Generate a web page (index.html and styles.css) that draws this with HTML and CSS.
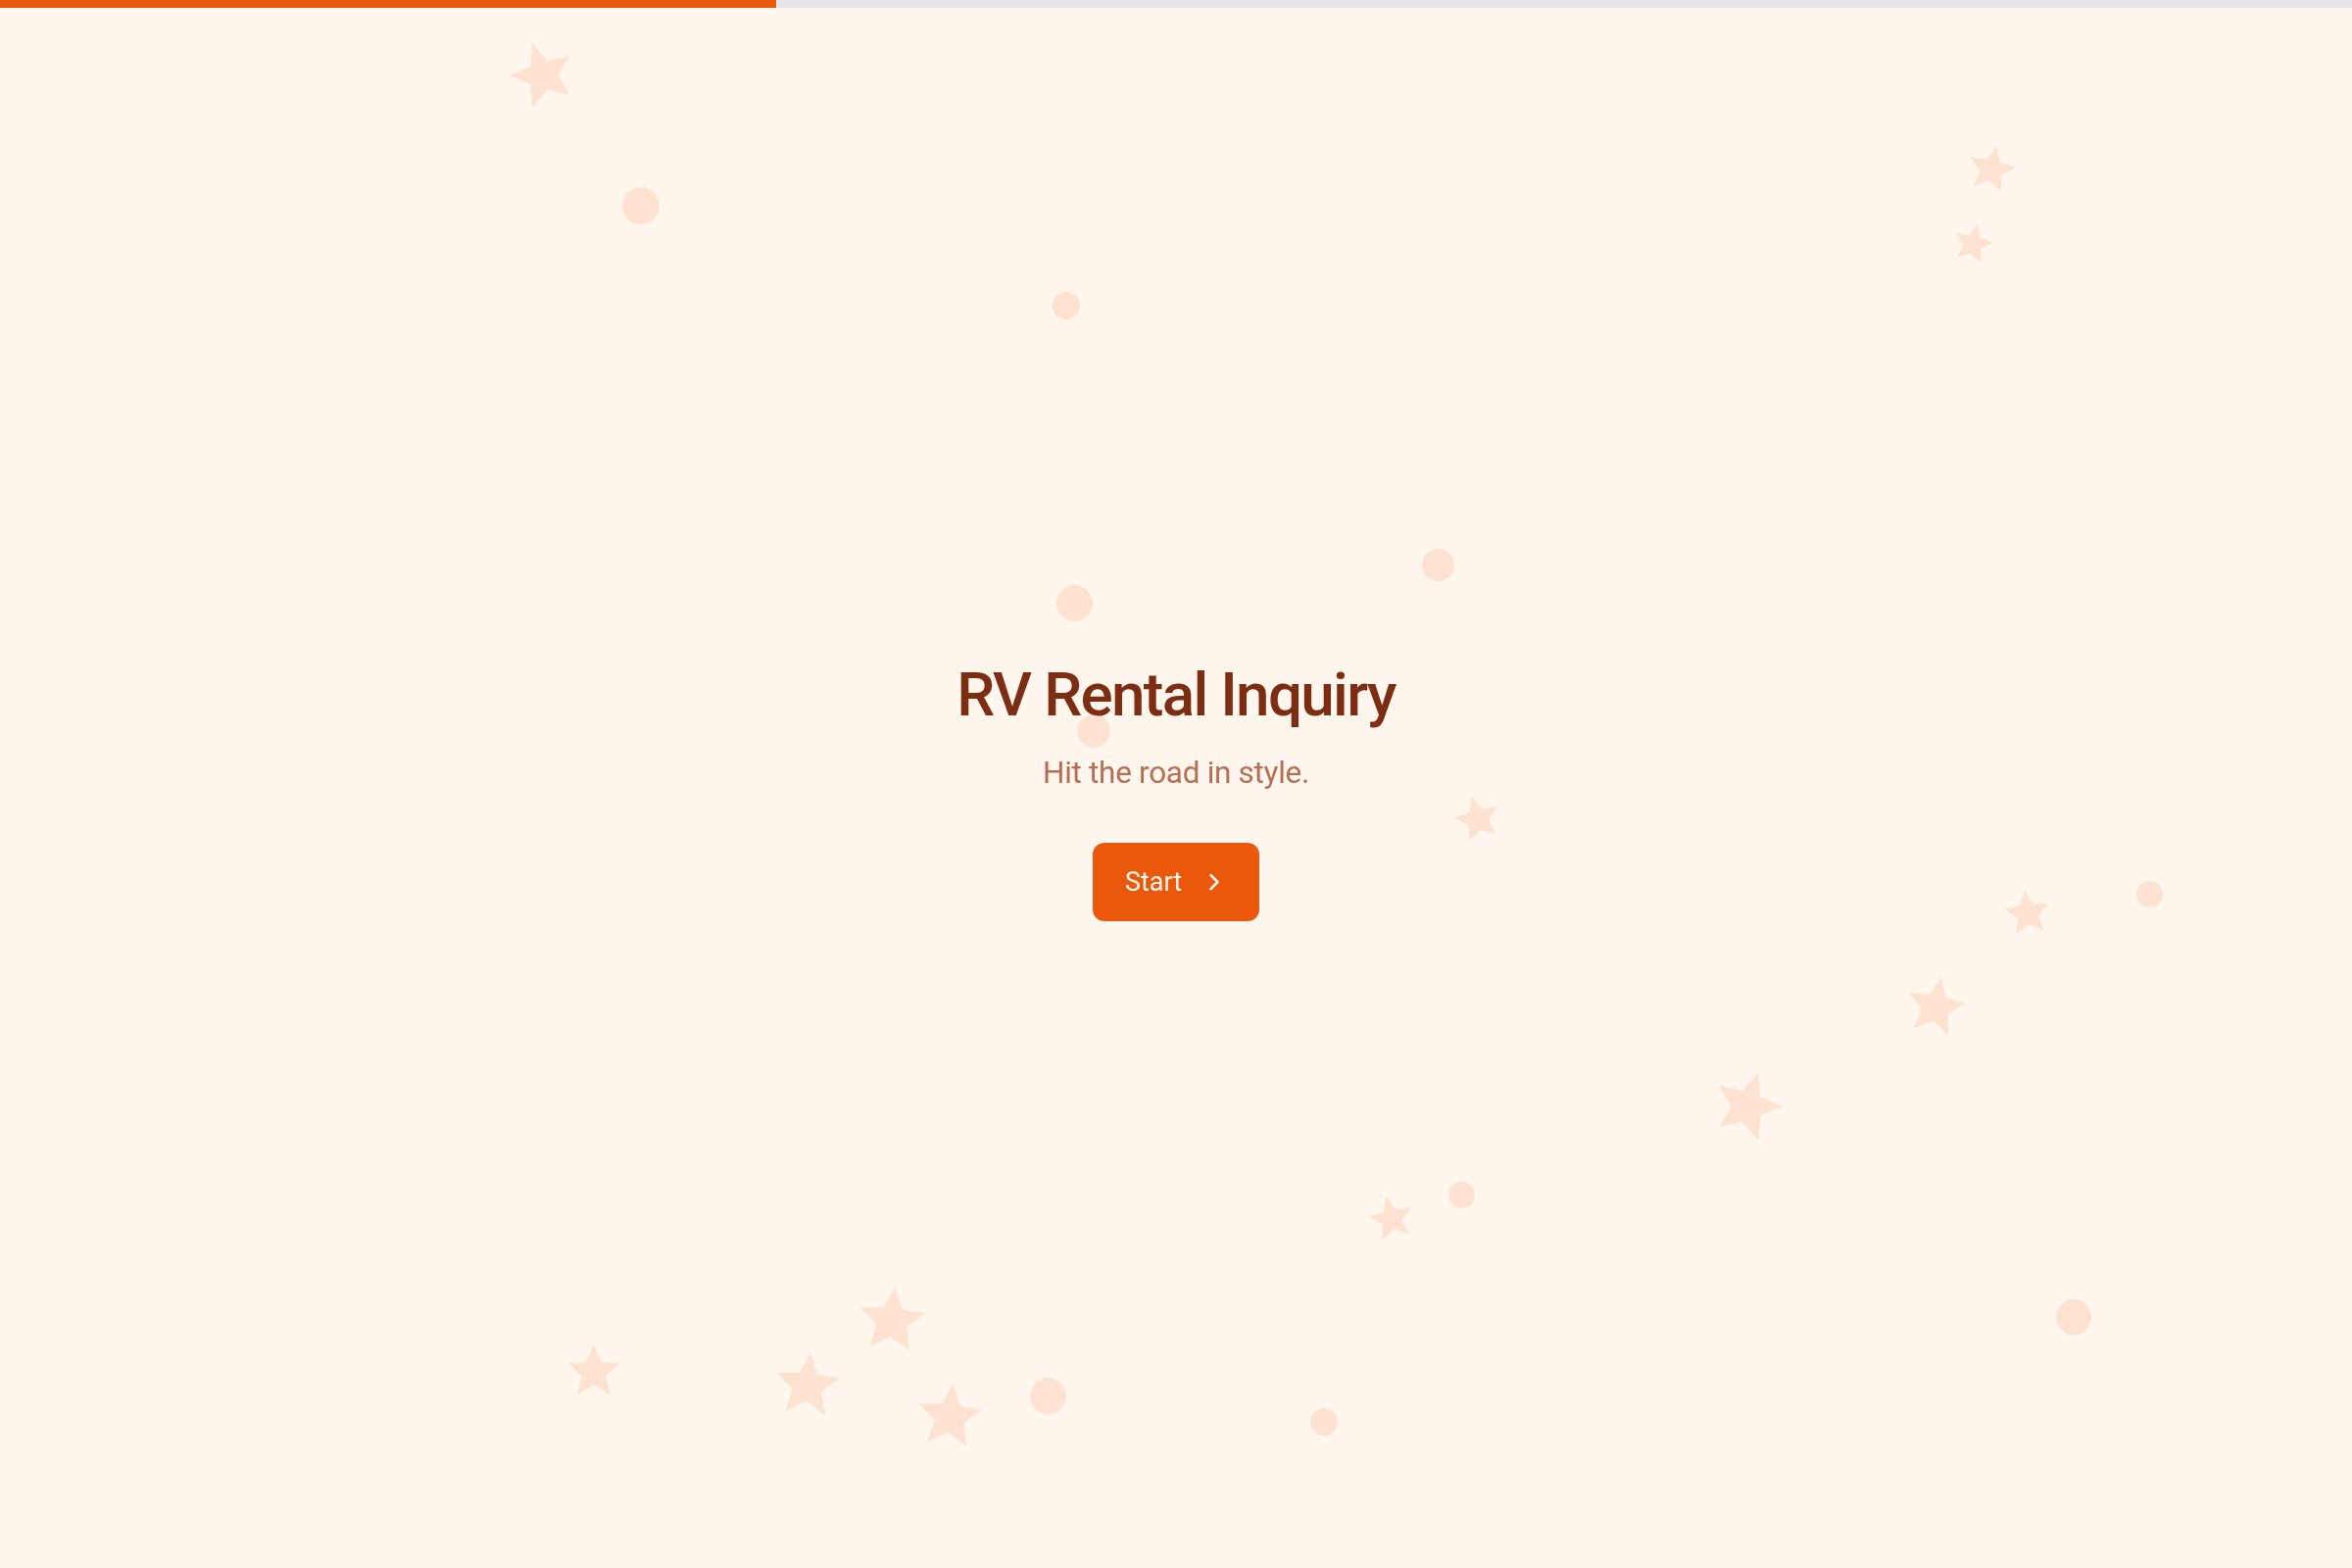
FILE: index.html
```html
<!DOCTYPE html>
<html lang="en">
<head>
<meta charset="utf-8">
<title>RV Rental Inquiry</title>
<link rel="stylesheet" href="styles.css">
</head>
<body>
<div class="progress"><div class="progress-fill" style="width:33%"></div></div>

<div class="decor" aria-hidden="true">
  <svg class="star" style="left:520px;top:43px;width:68px;height:68px;transform:rotate(-18deg)" viewBox="0 0 100 100"><polygon points="50,0 63.52,31.39 97.55,34.55 71.87,57.11 79.39,90.45 50,73 20.61,90.45 28.13,57.11 2.45,34.55 36.48,31.39"/></svg>
  <svg class="star" style="left:2007px;top:148px;width:50px;height:50px;transform:rotate(12deg)" viewBox="0 0 100 100"><polygon points="50,0 63.52,31.39 97.55,34.55 71.87,57.11 79.39,90.45 50,73 20.61,90.45 28.13,57.11 2.45,34.55 36.48,31.39"/></svg>
  <svg class="star" style="left:1992px;top:228px;width:42px;height:42px;transform:rotate(13deg)" viewBox="0 0 100 100"><polygon points="50,0 63.52,31.39 97.55,34.55 71.87,57.11 79.39,90.45 50,73 20.61,90.45 28.13,57.11 2.45,34.55 36.48,31.39"/></svg>
  <svg class="star" style="left:1484px;top:812px;width:48px;height:48px;transform:rotate(-15deg)" viewBox="0 0 100 100"><polygon points="50,0 63.52,31.39 97.55,34.55 71.87,57.11 79.39,90.45 50,73 20.61,90.45 28.13,57.11 2.45,34.55 36.48,31.39"/></svg>
  <svg class="star" style="left:2045px;top:908px;width:48px;height:48px;transform:rotate(-7deg)" viewBox="0 0 100 100"><polygon points="50,0 63.52,31.39 97.55,34.55 71.87,57.11 79.39,90.45 50,73 20.61,90.45 28.13,57.11 2.45,34.55 36.48,31.39"/></svg>
  <svg class="star" style="left:1944px;top:997px;width:62px;height:62px;transform:rotate(11deg)" viewBox="0 0 100 100"><polygon points="50,0 63.52,31.39 97.55,34.55 71.87,57.11 79.39,90.45 50,73 20.61,90.45 28.13,57.11 2.45,34.55 36.48,31.39"/></svg>
  <svg class="star" style="left:1747px;top:1093px;width:72px;height:72px;transform:rotate(18deg)" viewBox="0 0 100 100"><polygon points="50,0 63.52,31.39 97.55,34.55 71.87,57.11 79.39,90.45 50,73 20.61,90.45 28.13,57.11 2.45,34.55 36.48,31.39"/></svg>
  <svg class="star" style="left:1397px;top:1221px;width:46px;height:46px;transform:rotate(-13deg)" viewBox="0 0 100 100"><polygon points="50,0 63.52,31.39 97.55,34.55 71.87,57.11 79.39,90.45 50,73 20.61,90.45 28.13,57.11 2.45,34.55 36.48,31.39"/></svg>
  <svg class="star" style="left:875px;top:1313px;width:70px;height:70px;transform:rotate(5deg)" viewBox="0 0 100 100"><polygon points="50,0 63.52,31.39 97.55,34.55 71.87,57.11 79.39,90.45 50,73 20.61,90.45 28.13,57.11 2.45,34.55 36.48,31.39"/></svg>
  <svg class="star" style="left:578px;top:1372px;width:56px;height:56px;transform:rotate(0deg)" viewBox="0 0 100 100"><polygon points="50,0 63.52,31.39 97.55,34.55 71.87,57.11 79.39,90.45 50,73 20.61,90.45 28.13,57.11 2.45,34.55 36.48,31.39"/></svg>
  <svg class="star" style="left:790px;top:1380px;width:68px;height:68px;transform:rotate(5deg)" viewBox="0 0 100 100"><polygon points="50,0 63.52,31.39 97.55,34.55 71.87,57.11 79.39,90.45 50,73 20.61,90.45 28.13,57.11 2.45,34.55 36.48,31.39"/></svg>
  <svg class="star" style="left:935px;top:1412px;width:68px;height:68px;transform:rotate(6deg)" viewBox="0 0 100 100"><polygon points="50,0 63.52,31.39 97.55,34.55 71.87,57.11 79.39,90.45 50,73 20.61,90.45 28.13,57.11 2.45,34.55 36.48,31.39"/></svg>

  <span class="dot" style="left:635px;top:191px;width:38px;height:38px"></span>
  <span class="dot" style="left:1074px;top:298px;width:28px;height:28px"></span>
  <span class="dot" style="left:1451px;top:560px;width:33px;height:33px"></span>
  <span class="dot" style="left:1078px;top:597px;width:37px;height:37px"></span>
  <span class="dot" style="left:1099px;top:729px;width:34px;height:34px"></span>
  <span class="dot" style="left:2180px;top:899px;width:27px;height:27px"></span>
  <span class="dot" style="left:1478px;top:1206px;width:27px;height:27px"></span>
  <span class="dot" style="left:2098px;top:1326px;width:36px;height:36px"></span>
  <span class="dot" style="left:1051px;top:1406px;width:37px;height:37px"></span>
  <span class="dot" style="left:1337px;top:1437px;width:28px;height:28px"></span>
</div>

<main class="screen">
  <section class="intro">
    <h1 class="intro-title">RV Rental Inquiry</h1>
    <p class="intro-subtitle">Hit the road in style.</p>
    <button class="start-btn" type="button">
      <span>Start</span>
      <svg class="chevron" viewBox="0 0 24 24" fill="none" stroke="currentColor" stroke-width="2.2" stroke-linecap="round" stroke-linejoin="round"><path d="m9 18 6-6-6-6"/></svg>
    </button>
  </section>
</main>
</body>
</html>
```

FILE: styles.css
```css
* {
  box-sizing: border-box;
}

html, body {
  margin: 0;
  padding: 0;
}

body {
  background: #fff7ed;
  font-family: Roboto, "Noto Sans", "Liberation Sans", sans-serif;
  min-height: 100vh;
  overflow: hidden;
}

.progress {
  position: fixed;
  top: 0;
  left: 0;
  right: 0;
  height: 8px;
  background: #e5e7eb;
  z-index: 5;
}

.progress-fill {
  height: 100%;
  background: #ea580c;
}

.decor {
  position: fixed;
  inset: 0;
  z-index: 0;
  pointer-events: none;
}

.star {
  position: absolute;
  fill: #fde2d1;
}

.dot {
  position: absolute;
  border-radius: 50%;
  background: #fde2d1;
}

.screen {
  position: relative;
  z-index: 1;
  min-height: 100vh;
  padding-top: 10px;
  display: flex;
  align-items: center;
  justify-content: center;
}

.intro {
  display: flex;
  flex-direction: column;
  align-items: center;
  text-align: center;
}

.intro-title {
  margin: 0;
  font-size: 62px;
  line-height: 77px;
  font-weight: 500;
  letter-spacing: -1.7px;
  color: #7c2d12;
}

.intro-subtitle {
  margin: 19px 0 0;
  font-size: 31.5px;
  line-height: 46px;
  font-weight: 400;
  letter-spacing: -0.3px;
  color: #b86e54;
}

.start-btn {
  margin-top: 48px;
  display: flex;
  align-items: center;
  gap: 19px;
  height: 80px;
  padding: 0 32px 0 33px;
  border: none;
  border-radius: 12px;
  background: #ea580c;
  color: #fff7ed;
  font-family: inherit;
  font-size: 27px;
  font-weight: 400;
  cursor: pointer;
}

.chevron {
  width: 28px;
  height: 28px;
}
```
